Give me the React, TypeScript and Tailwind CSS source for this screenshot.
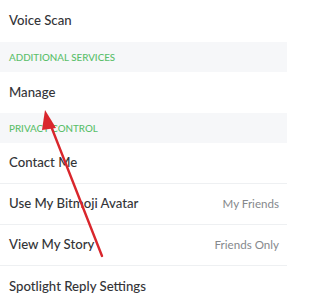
import React from 'react';

interface Row {
  label: string;
  value?: string;
}

const Section: React.FC<{ title: string }> = ({ title }) => (
  <div className="h-[30px] bg-[#f6f7f9] flex items-center pl-[9px] text-[9.8px] font-medium text-[#5bbf6b] uppercase">
    {title}
  </div>
);

const Item: React.FC<Row & { divider?: boolean }> = ({ label, value, divider }) => (
  <div
    className={`h-[41px] shrink-0 flex items-center justify-between pl-[9px] pr-[8px] bg-white ${
      divider ? 'border-b border-[#eef0f2]' : ''
    }`}
  >
    <span className="text-[13.2px] font-medium text-[#333437]">{label}</span>
    {value && <span className="text-[11.6px] text-[#85888c]">{value}</span>}
  </div>
);

const privacyRows: Row[] = [
  { label: 'Contact Me' },
  { label: 'Use My Bitmoji Avatar', value: 'My Friends' },
  { label: 'View My Story', value: 'Friends Only' },
  { label: 'Spotlight Reply Settings' },
];

export default function App() {
  return (
    <div className="relative w-[287px] h-[300px] overflow-hidden bg-white font-['Lato',sans-serif]">
      <div className="h-[42px] flex items-center pl-[9px] text-[13.2px] font-medium text-[#333437]">Voice Scan</div>
      <Section title="Additional Services" />
      <Item label="Manage" />
      <Section title="Privacy Control" />
      {privacyRows.map((row, i) => (
        <Item key={row.label} {...row} divider={i < privacyRows.length - 1} />
      ))}

      {/* red annotation arrow */}
      <svg className="absolute left-0 top-0 pointer-events-none" width="287" height="300" viewBox="0 0 287 300">
        <line x1="102" y1="256" x2="49" y2="121" stroke="#d9262c" strokeWidth="2.4" strokeLinecap="round" />
        <polygon points="45,110 56,128 42,130" fill="#d9262c" />
      </svg>
    </div>
  );
}
